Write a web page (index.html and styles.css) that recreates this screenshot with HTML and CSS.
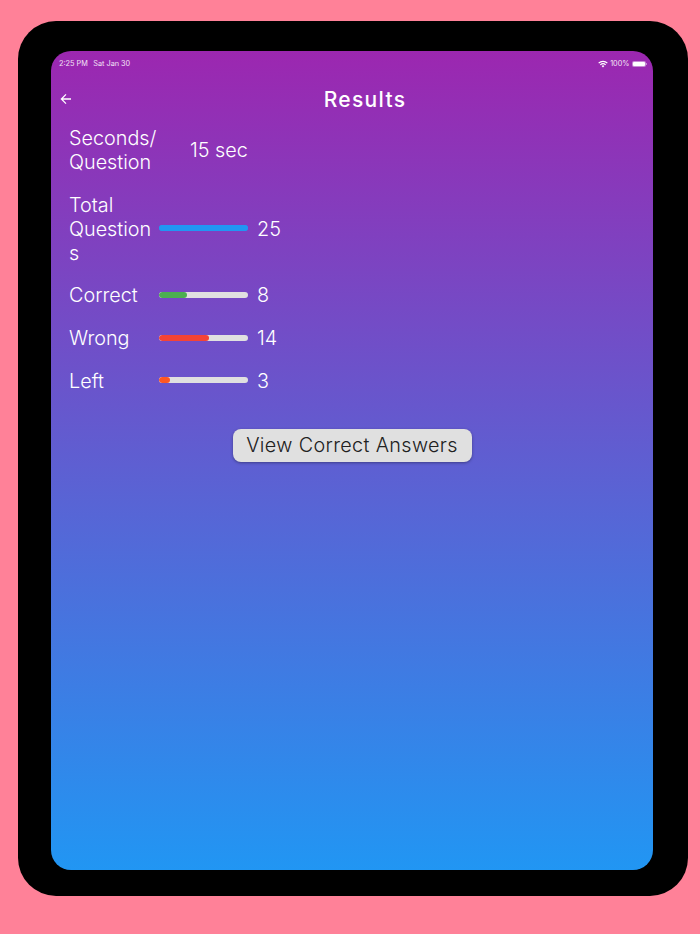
FILE: index.html
```html
<!DOCTYPE html>
<html lang="en">
<head>
  <meta charset="UTF-8">
  <title>Results</title>
  <link rel="stylesheet" href="styles.css">
</head>
<body>
  <div class="tablet">
    <div class="screen">
      <div class="status-bar">
        <div class="status-left">
          <span>2:25 PM</span>
          <span>Sat Jan 30</span>
        </div>
        <div class="status-right">
          <svg class="wifi" width="10" height="8" viewBox="0 0 10 8">
            <path d="M0.2 2.7A6.9 6.9 0 0 1 9.8 2.7L8.9 3.6A5.6 5.6 0 0 0 1.1 3.6Z" fill="#fff"/>
            <path d="M1.9 4.4A4.5 4.5 0 0 1 8.1 4.4L7.2 5.3A3.2 3.2 0 0 0 2.8 5.3Z" fill="#fff"/>
            <path d="M3.6 6A2 2 0 0 1 6.4 6L5 7.6Z" fill="#fff"/>
          </svg>
          <span>100%</span>
          <div class="battery"><div class="battery-fill"></div></div>
        </div>
      </div>
      <div class="app-bar">
        <svg class="back" width="12" height="12" viewBox="0 0 12 12">
          <path d="M11 6H1.6M6 1.4L1.4 6L6 10.6" fill="none" stroke="#fff" stroke-width="1.3"/>
        </svg>
        <h1>Results</h1>
      </div>
      <div class="stats">
        <div class="row">
          <div class="label">Seconds/ Question</div>
          <div class="value seconds">15 sec</div>
        </div>
        <div class="row">
          <div class="label">Total Questions</div>
          <div class="track full"><div class="fill blue" style="width: 100%"></div></div>
          <div class="value">25</div>
        </div>
        <div class="row">
          <div class="label">Correct</div>
          <div class="track"><div class="fill green" style="width: 32%"></div></div>
          <div class="value">8</div>
        </div>
        <div class="row">
          <div class="label">Wrong</div>
          <div class="track"><div class="fill red" style="width: 56%"></div></div>
          <div class="value">14</div>
        </div>
        <div class="row">
          <div class="label">Left</div>
          <div class="track"><div class="fill orange" style="width: 12%"></div></div>
          <div class="value">3</div>
        </div>
      </div>
      <div class="buttons">
        <button type="button">View Correct Answers</button>
      </div>
    </div>
  </div>
</body>
</html>
```

FILE: styles.css
```css
* { box-sizing: border-box; }
body {
  margin: 0;
  height: 934px;
  padding: 21px 12px 38px 18px;
  background: #ff8198;
  font-family: Inter, "Liberation Sans", sans-serif;
  overflow: hidden;
}
.tablet {
  height: 875px;
  padding: 30px 35px 26px 33px;
  background: #000;
  border-radius: 38px;
}
.screen {
  height: 819px;
  background: linear-gradient(to bottom, #9c27b0, #2196f3);
  border-radius: 20px;
  color: #fff;
  overflow: hidden;
}
.status-bar {
  display: flex;
  justify-content: space-between;
  align-items: center;
  height: 25px;
  padding: 0 7px 0 8px;
  font-size: 7.3px;
  color: #f3e3f6;
}
.status-left {
  display: flex;
  gap: 5.5px;
}
.status-right {
  display: flex;
  align-items: center;
  gap: 2.5px;
}
.battery {
  position: relative;
  width: 14px;
  height: 6px;
  padding: 1px;
  border-radius: 2px;
  background: rgba(255,255,255,0.45);
}
.battery::after {
  content: "";
  position: absolute;
  top: 2px;
  right: -1px;
  width: 1px;
  height: 2px;
  background: rgba(255,255,255,0.45);
}
.battery-fill {
  height: 100%;
  background: #fff;
  border-radius: 1px;
}
.app-bar {
  display: flex;
  align-items: center;
  height: 46px;
  padding-left: 9px;
}
.app-bar h1 {
  flex: 1;
  margin: 0;
  padding-left: 5px;
  text-align: center;
  font-size: 21px;
  font-weight: 500;
  letter-spacing: 1.3px;
}
.stats {
  display: flex;
  flex-direction: column;
  gap: 18.7px;
  padding: 4px 0 0 18px;
}
.row {
  display: flex;
  align-items: center;
  font-size: 19.8px;
  font-weight: 350;
  line-height: 24px;
}
.label {
  width: 90px;
  overflow-wrap: break-word;
}
.track {
  width: 89px;
  height: 6px;
  margin-top: -1px;
  margin-right: 9px;
  background: #e0e0e0;
  border-radius: 3px;
  overflow: hidden;
}
.track.full {
  background: #2196f3;
}
.fill {
  height: 100%;
  border-radius: 3px;
}
.blue { background: #2196f3; }
.green { background: #4caf50; }
.red { background: #f44336; }
.orange { background: #ff5722; }
.seconds {
  margin-left: 31px;
}
.buttons {
  display: flex;
  justify-content: center;
  margin-top: 36px;
}
.buttons button {
  height: 33px;
  width: 239px;
  padding: 0;
  border: none;
  border-radius: 8px;
  background: #e0e0e0;
  box-shadow: 0 1px 3px rgba(0,0,0,0.35);
  color: #212121;
  font-family: inherit;
  font-size: 19.8px;
  font-weight: 350;
  letter-spacing: 0.35px;
}
```
